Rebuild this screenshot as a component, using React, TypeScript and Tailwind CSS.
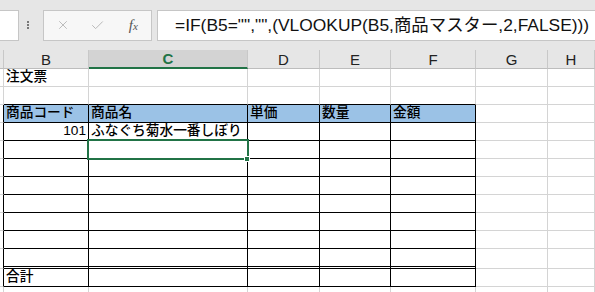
import React from "react";
import { X, Check } from "lucide-react";

const colW = [
  "w-[4px] shrink-0",
  "w-[85px] shrink-0",
  "w-[159px] shrink-0",
  "w-[72px] shrink-0",
  "w-[71px] shrink-0",
  "w-[85px] shrink-0",
  "w-[72px] shrink-0",
  "flex-1",
];

const letters = ["", "B", "C", "D", "E", "F", "G", "H"];

// row number -> cell contents (index = column)
const data: Record<number, (string | null)[]> = {
  2: [null, "注文票"],
  4: [null, "商品コード", "商品名", "単価", "数量", "金額"],
  5: [null, "101", "ふなぐち菊水一番しぼり"],
  13: [null, "合計"],
};

const rowH: Record<number, string> = {
  12: "h-[20px]",
  14: "h-[6px]",
};

function FormulaBar() {
  return (
    <div className="flex h-[50px] items-center bg-[#e6e6e6]">
      <div className="h-[31px] w-[19px] shrink-0 bg-white border border-l-0 border-[#c6c6c6]" />
      <div className="flex w-[24px] shrink-0 pl-[8px]">
        <div className="flex flex-col gap-[1px]">
          <div className="h-[2px] w-[2px] rounded-full bg-[#555]" />
          <div className="h-[2px] w-[2px] rounded-full bg-[#555]" />
          <div className="h-[2px] w-[2px] rounded-full bg-[#555]" />
        </div>
      </div>
      <div className="flex h-[31px] w-[109px] shrink-0 items-center border border-[#c6c6c6] bg-[#f7f7f7] pl-[1px]">
        <div className="flex w-[36px] justify-center text-[#b4b4b4]">
          <X size={14} strokeWidth={1.5} />
        </div>
        <div className="flex w-[36px] justify-center text-[#b4b4b4]">
          <Check size={15} strokeWidth={1.5} />
        </div>
        <div className="flex w-[36px] justify-center">
          <span className="font-['Liberation_Serif',serif] text-[15px] italic leading-none text-[#555]">
            f<span className="text-[11px]">x</span>
          </span>
        </div>
      </div>
      <div className="ml-[5px] flex h-[31px] flex-1 items-center whitespace-nowrap border border-r-0 border-[#c6c6c6] bg-white pl-[17px] font-['Liberation_Sans','Noto_Sans_CJK_JP',sans-serif] text-[17.4px] text-[#111]">
        =IF(B5="","",(VLOOKUP(B5,商品マスター,2,FALSE)))
      </div>
    </div>
  );
}

function ColumnHeaders() {
  return (
    <div className="flex h-[19px] bg-[#e6e6e6]">
      {letters.map((l, c) =>
        c === 2 ? (
          <div
            key={c}
            className={`${colW[c]} flex items-center justify-center border-r border-r-[#c8c8c8] border-b-2 border-b-[#217346] bg-[#d3d3d3] text-[15px] font-bold leading-none text-[#217346]`}
          >
            {l}
          </div>
        ) : (
          <div
            key={c}
            className={`${colW[c]} flex items-center justify-center border-r border-r-[#c8c8c8] border-b border-b-[#bdbdbd] text-[15px] leading-none text-[#222]`}
          >
            {l}
          </div>
        )
      )}
    </div>
  );
}

function Cell({ r, c }: { r: number; c: number }) {
  const inTableRow = r >= 4 && r <= 13;
  const inTableCol = c >= 1 && c <= 5;
  const right =
    inTableRow && c <= 5 ? "border-r border-r-black" : "border-r border-r-[#d4d4d4]";
  let bottom = "border-b border-b-[#d4d4d4]";
  if (inTableCol && r >= 3 && r <= 13) bottom = "border-b border-b-black";
  if (inTableCol && r === 12) bottom = "border-b-[3px] border-double border-b-black";
  const bg = r === 4 && inTableCol ? "bg-[#9bc2e6]" : "";
  const text = data[r]?.[c] ?? null;
  const align = r === 5 && c === 1 ? "justify-end" : "justify-start";
  const pad = c === 0 ? "" : "px-[2px]";
  return (
    <div
      className={`${colW[c]} ${right} ${bottom} ${bg} ${align} ${pad} flex items-end overflow-visible pb-[1px] whitespace-nowrap`}
    >
      {text && (
        <span className="font-['Liberation_Sans','Noto_Sans_CJK_JP',sans-serif] text-[13.7px] font-medium leading-[16px]">
          {text}
        </span>
      )}
    </div>
  );
}

export default function App() {
  const rows = [2, 3, 4, 5, 6, 7, 8, 9, 10, 11, 12, 13, 14];
  return (
    <div className="relative h-[292px] w-[595px] overflow-hidden bg-white font-['Liberation_Sans',sans-serif] text-black">
      <FormulaBar />
      <ColumnHeaders />
      {rows.map((r) => (
        <div key={r} className={`flex ${rowH[r] ?? "h-[18px]"}`}>
          {colW.map((_, c) => (
            <Cell key={c} r={r} c={c} />
          ))}
        </div>
      ))}
      {/* active cell C6 */}
      <div className="absolute left-[87px] top-[139px] h-[21px] w-[162px] border-2 border-[#217346]" />
      <div className="absolute left-[244px] top-[156px] h-[6px] w-[6px] border border-white bg-[#217346]" />
    </div>
  );
}
